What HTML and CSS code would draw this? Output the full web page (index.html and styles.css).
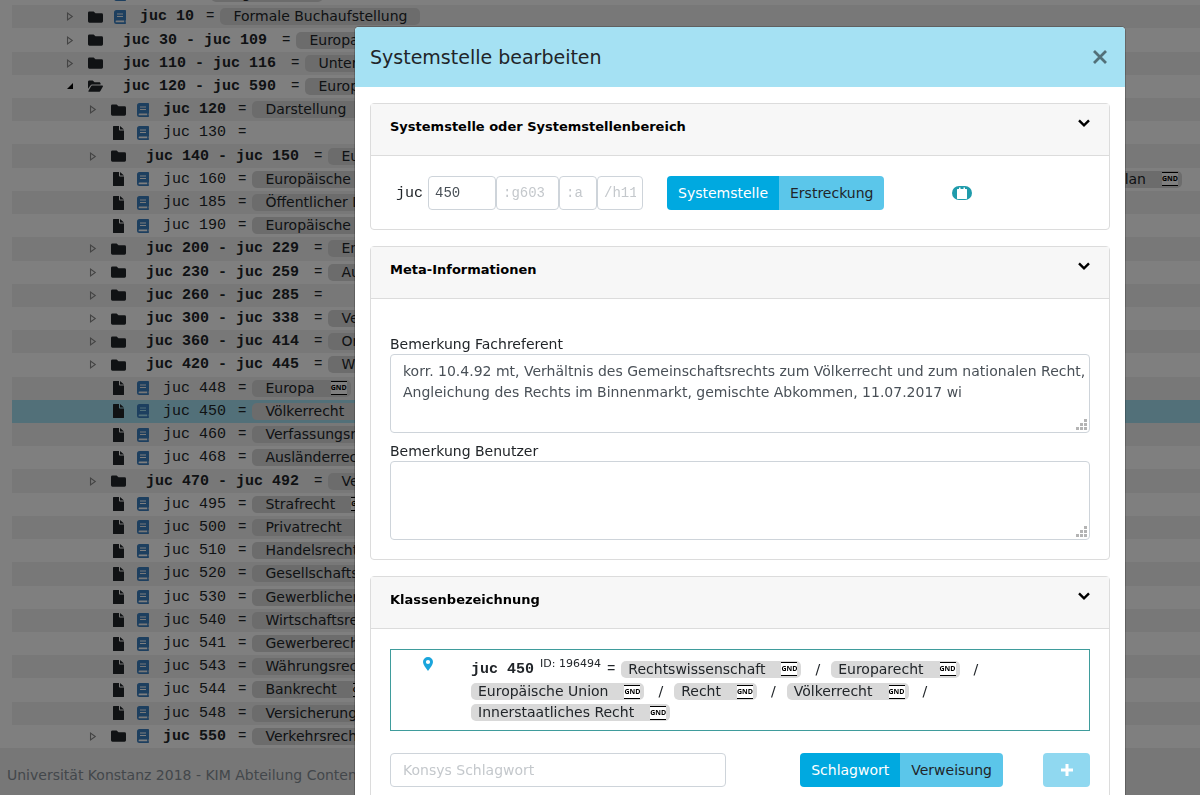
FILE: index.html
```html
<!DOCTYPE html>
<html lang="de">
<head>
<meta charset="utf-8">
<title>Systemstelle bearbeiten</title>
<link rel="stylesheet" href="styles.css">
</head>
<body>
<svg class="sprite" aria-hidden="true">
  <symbol id="folder" viewBox="0 0 16 12"><path d="M1.500 0H6l2 2h6.500A1.500 1.500 0 0 1 16 3.500v7a1.500 1.500 0 0 1-1.500 1.500h-13A1.500 1.500 0 0 1 0 10.500v-9A1.500 1.500 0 0 1 1.500 0z"/></symbol>
  <symbol id="open" viewBox="0 0 16 12"><path d="M0 9V1.500C0 .7.600 0 1.400 0H5l2 2h5c.8 0 1.400.6 1.400 1.400V4.500H4.300c-.7 0-1.300.3-1.700 1zM.4 11.200 3.300 6.200c.2-.4.600-.7 1-.7h11c.6 0 .9.600.6 1L13.200 11.300c-.2.400-.6.700-1 .7H.9c-.5 0-.8-.4-.5-.8z"/></symbol>
  <symbol id="file" viewBox="0 0 11 14"><path d="M0 .6C0 .2.300 0 .6 0H6v3.500c0 .5.300.9.800.9H11v9c0 .4-.3.600-.6.600H.6c-.3 0-.6-.2-.6-.6zM7 0l4 3.600H7z"/></symbol>
  <symbol id="book" viewBox="0 0 12 14"><path fill-rule="evenodd" d="M2.500 0h8.700c.5 0 .8.300.8.800v9c0 .3-.1.500-.3.600-.1.500-.1 1.400 0 1.800.2.200.3.300.3.600v.4c0 .5-.3.800-.8.800H2.500A2.500 2.500 0 0 1 0 11.500v-9A2.500 2.500 0 0 1 2.500 0zM3 3.500v1h6v-1zM3 6v1h6V6zM2.500 10.500a.8.800 0 0 0 0 1.800h7.700v-1.800z"/></symbol>
  <symbol id="closed" viewBox="0 0 6 8"><path d="M.8 1v6L5 4z" fill="none" stroke="currentColor"/></symbol>
  <symbol id="opened" viewBox="0 0 6 6"><path d="M6 0v6H0z"/></symbol>
  <symbol id="chevron" viewBox="0 0 12 8"><path d="M1 1.300 6 6.300l5-5" fill="none" stroke="currentColor" stroke-width="2.400"/></symbol>
  <symbol id="grip" viewBox="0 0 11 11"><path d="M8 0h3v3H8zM4 4h3v3H4zM8 4h3v3H8zM0 8h3v3H0zM4 8h3v3H4zM8 8h3v3H8z"/></symbol>
</svg>

<div class="page">
  <main class="tree">
    <div class="row l1"><span class="caret"></span><svg class="ico"><use href="#folder"/></svg><svg class="book"><use href="#book"/></svg><b class="code">juc 1</b><span class="eq">=</span><span class="tag">Allgemeines</span></div>
    <div class="row l1"><svg class="caret"><use href="#closed"/></svg><svg class="ico"><use href="#folder"/></svg><svg class="book"><use href="#book"/></svg><b class="code">juc 10</b><span class="eq">=</span><span class="tag">Formale Buchaufstellung</span></div>
    <div class="row l1"><svg class="caret"><use href="#closed"/></svg><svg class="ico"><use href="#folder"/></svg><b class="code range">juc 30 - juc 109</b><span class="eq">=</span><span class="tag">Europa</span></div>
    <div class="row l1"><svg class="caret"><use href="#closed"/></svg><svg class="ico"><use href="#folder"/></svg><b class="code range">juc 110 - juc 116</b><span class="eq">=</span><span class="tag">Unterricht</span></div>
    <div class="row l1"><svg class="caret expanded"><use href="#opened"/></svg><svg class="ico"><use href="#open"/></svg><b class="code range">juc 120 - juc 590</b><span class="eq">=</span><span class="tag">Europarecht</span></div>
    <div class="row l2"><svg class="caret"><use href="#closed"/></svg><svg class="ico"><use href="#folder"/></svg><svg class="book"><use href="#book"/></svg><b class="code">juc 120</b><span class="eq">=</span><span class="tag">Darstellung</span></div>
    <div class="row l2"><span class="caret"></span><svg class="ico"><use href="#file"/></svg><svg class="book"><use href="#book"/></svg><span class="code">juc 130</span><span class="eq">=</span></div>
    <div class="row l2"><svg class="caret"><use href="#closed"/></svg><svg class="ico"><use href="#folder"/></svg><b class="code range">juc 140 - juc 150</b><span class="eq">=</span><span class="tag">Europa</span></div>
    <div class="row l2"><span class="caret"></span><svg class="ico"><use href="#file"/></svg><svg class="book"><use href="#book"/></svg><span class="code">juc 160</span><span class="eq">=</span><span class="tag wide"><span>Europäische Gemeinschaft</span><span class="tail">Plan<i class="gnd">GND</i></span></span></div>
    <div class="row l2"><span class="caret"></span><svg class="ico"><use href="#file"/></svg><svg class="book"><use href="#book"/></svg><span class="code">juc 185</span><span class="eq">=</span><span class="tag">Öffentlicher Dienst</span></div>
    <div class="row l2"><span class="caret"></span><svg class="ico"><use href="#file"/></svg><svg class="book"><use href="#book"/></svg><span class="code">juc 190</span><span class="eq">=</span><span class="tag">Europäische Agentur</span></div>
    <div class="row l2"><svg class="caret"><use href="#closed"/></svg><svg class="ico"><use href="#folder"/></svg><b class="code range">juc 200 - juc 229</b><span class="eq">=</span><span class="tag">Energie</span></div>
    <div class="row l2"><svg class="caret"><use href="#closed"/></svg><svg class="ico"><use href="#folder"/></svg><b class="code range">juc 230 - juc 259</b><span class="eq">=</span><span class="tag">Autor</span></div>
    <div class="row l2"><svg class="caret"><use href="#closed"/></svg><svg class="ico"><use href="#folder"/></svg><b class="code range">juc 260 - juc 285</b><span class="eq">=</span></div>
    <div class="row l2"><svg class="caret"><use href="#closed"/></svg><svg class="ico"><use href="#folder"/></svg><b class="code range">juc 300 - juc 338</b><span class="eq">=</span><span class="tag">Verwaltung</span></div>
    <div class="row l2"><svg class="caret"><use href="#closed"/></svg><svg class="ico"><use href="#folder"/></svg><b class="code range">juc 360 - juc 414</b><span class="eq">=</span><span class="tag">Organ</span></div>
    <div class="row l2"><svg class="caret"><use href="#closed"/></svg><svg class="ico"><use href="#folder"/></svg><b class="code range">juc 420 - juc 445</b><span class="eq">=</span><span class="tag">Ware</span></div>
    <div class="row l2"><span class="caret"></span><svg class="ico"><use href="#file"/></svg><svg class="book"><use href="#book"/></svg><span class="code">juc 448</span><span class="eq">=</span><span class="tag">Europa<i class="gnd">GND</i></span></div>
    <div class="row l2 selected"><span class="caret"></span><svg class="ico"><use href="#file"/></svg><svg class="book"><use href="#book"/></svg><span class="code">juc 450</span><span class="eq">=</span><span class="tag">Völkerrecht<i class="gnd">GND</i></span></div>
    <div class="row l2"><span class="caret"></span><svg class="ico"><use href="#file"/></svg><svg class="book"><use href="#book"/></svg><span class="code">juc 460</span><span class="eq">=</span><span class="tag">Verfassungsrecht</span></div>
    <div class="row l2"><span class="caret"></span><svg class="ico"><use href="#file"/></svg><svg class="book"><use href="#book"/></svg><span class="code">juc 468</span><span class="eq">=</span><span class="tag">Ausländerrecht</span></div>
    <div class="row l2"><svg class="caret"><use href="#closed"/></svg><svg class="ico"><use href="#folder"/></svg><b class="code range">juc 470 - juc 492</b><span class="eq">=</span><span class="tag">Verwaltung</span></div>
    <div class="row l2"><span class="caret"></span><svg class="ico"><use href="#file"/></svg><svg class="book"><use href="#book"/></svg><span class="code">juc 495</span><span class="eq">=</span><span class="tag">Strafrecht<i class="gnd">GND</i></span></div>
    <div class="row l2"><span class="caret"></span><svg class="ico"><use href="#file"/></svg><svg class="book"><use href="#book"/></svg><span class="code">juc 500</span><span class="eq">=</span><span class="tag">Privatrecht<i class="gnd">GND</i></span></div>
    <div class="row l2"><span class="caret"></span><svg class="ico"><use href="#file"/></svg><svg class="book"><use href="#book"/></svg><span class="code">juc 510</span><span class="eq">=</span><span class="tag">Handelsrecht</span></div>
    <div class="row l2"><span class="caret"></span><svg class="ico"><use href="#file"/></svg><svg class="book"><use href="#book"/></svg><span class="code">juc 520</span><span class="eq">=</span><span class="tag">Gesellschaftsrecht</span></div>
    <div class="row l2"><span class="caret"></span><svg class="ico"><use href="#file"/></svg><svg class="book"><use href="#book"/></svg><span class="code">juc 530</span><span class="eq">=</span><span class="tag">Gewerblicher</span></div>
    <div class="row l2"><span class="caret"></span><svg class="ico"><use href="#file"/></svg><svg class="book"><use href="#book"/></svg><span class="code">juc 540</span><span class="eq">=</span><span class="tag">Wirtschaftsrecht</span></div>
    <div class="row l2"><span class="caret"></span><svg class="ico"><use href="#file"/></svg><svg class="book"><use href="#book"/></svg><span class="code">juc 541</span><span class="eq">=</span><span class="tag">Gewerberecht</span></div>
    <div class="row l2"><span class="caret"></span><svg class="ico"><use href="#file"/></svg><svg class="book"><use href="#book"/></svg><span class="code">juc 543</span><span class="eq">=</span><span class="tag">Währungsrecht</span></div>
    <div class="row l2"><span class="caret"></span><svg class="ico"><use href="#file"/></svg><svg class="book"><use href="#book"/></svg><span class="code">juc 544</span><span class="eq">=</span><span class="tag">Bankrecht<i class="gnd">GND</i></span></div>
    <div class="row l2"><span class="caret"></span><svg class="ico"><use href="#file"/></svg><svg class="book"><use href="#book"/></svg><span class="code">juc 548</span><span class="eq">=</span><span class="tag">Versicherung</span></div>
    <div class="row l2"><svg class="caret"><use href="#closed"/></svg><svg class="ico"><use href="#folder"/></svg><svg class="book"><use href="#book"/></svg><b class="code">juc 550</b><span class="eq">=</span><span class="tag">Verkehrsrecht</span></div>
  </main>
  <footer class="footer">Universität Konstanz 2018 - KIM Abteilung Content</footer>
</div>

<div class="overlay">
  <div class="modal" role="dialog" aria-labelledby="title">
    <header class="modal-head">
      <h1 id="title">Systemstelle bearbeiten</h1>
      <button class="close" aria-label="Schließen"><svg width="14" height="14" viewBox="0 0 14 14"><path d="m1 1 12 12m0-12-12 12" stroke="currentColor" stroke-width="2.800"/></svg></button>
    </header>
    <div class="modal-body">
      <section class="card">
        <header class="card-head"><h2>Systemstelle oder Systemstellenbereich</h2><button class="fold" aria-label="Einklappen"><svg><use href="#chevron"/></svg></button></header>
        <form class="card-body position">
          <label class="prefix" for="nr">juc</label>
          <div class="parts">
            <input class="nr" id="nr" value="450">
            <input class="sub" aria-label="Untergliederung" placeholder=":g603">
            <input class="letter" aria-label="Buchstabe" placeholder=":a">
            <input class="ext" aria-label="Zusatz" placeholder="/h11">
          </div>
          <div class="group"><button type="button" class="btn on">Systemstelle</button><button type="button" class="btn">Erstreckung</button></div>
          <button type="button" class="badge" aria-label="Kalender"><svg width="12" height="12" viewBox="0 0 12 12"><path d="M1.500 2H3V.5h1.500V2h3V.5H9V2h1.500c.3 0 .5.200.5.500v9c0 .3-.2.500-.5.500h-9c-.3 0-.5-.2-.5-.5v-9c0-.3.200-.5.500-.5z" fill="#fff"/></svg></button>
        </form>
      </section>

      <section class="card">
        <header class="card-head"><h2>Meta-Informationen</h2><button class="fold" aria-label="Einklappen"><svg><use href="#chevron"/></svg></button></header>
        <div class="card-body notes">
          <div class="note"><label for="n1">Bemerkung Fachreferent</label>
            <div class="area"><textarea id="n1">korr. 10.4.92 mt, Verhältnis des Gemeinschaftsrechts zum Völkerrecht und zum nationalen Recht, Angleichung des Rechts im Binnenmarkt, gemischte Abkommen, 11.07.2017 wi</textarea><svg class="grip"><use href="#grip"/></svg></div></div>
          <div class="note"><label for="n2">Bemerkung Benutzer</label>
            <div class="area"><textarea id="n2"></textarea><svg class="grip"><use href="#grip"/></svg></div></div>
        </div>
      </section>

      <section class="card">
        <header class="card-head"><h2>Klassenbezeichnung</h2><button class="fold" aria-label="Einklappen"><svg><use href="#chevron"/></svg></button></header>
        <div class="card-body">
          <div class="entry">
            <svg class="pin" viewBox="0 0 10 14"><path fill-rule="evenodd" d="M5 0a5 5 0 0 1 5 5c0 2.800-2.600 5.500-5 9C2.600 10.500 0 7.800 0 5a5 5 0 0 1 5-5zm0 2.900a2.100 2.100 0 1 0 0 4.200 2.100 2.100 0 0 0 0-4.200z"/></svg>
            <div class="terms">
              <div class="term"><b class="code">juc 450</b><small>ID: 196494</small><span class="eq">=</span><span class="tag">Rechtswissenschaft<i class="gnd">GND</i></span><span class="sep">/</span></div>
              <div class="term"><span class="tag">Europarecht<i class="gnd">GND</i></span><span class="sep">/</span></div>
              <div class="term"><span class="tag">Europäische Union<i class="gnd">GND</i></span><span class="sep">/</span></div>
              <div class="term"><span class="tag">Recht<i class="gnd">GND</i></span><span class="sep">/</span></div>
              <div class="term"><span class="tag">Völkerrecht<i class="gnd">GND</i></span><span class="sep">/</span></div>
              <div class="term"><span class="tag">Innerstaatliches Recht<i class="gnd">GND</i></span></div>
            </div>
          </div>
          <form class="add">
            <input class="keyword" aria-label="Konsys Schlagwort" placeholder="Konsys Schlagwort">
            <div class="group"><button type="button" class="btn on">Schlagwort</button><button type="button" class="btn">Verweisung</button></div>
            <button type="button" class="btn plus" aria-label="Hinzufügen"><svg width="12" height="12" viewBox="0 0 12 12"><path d="M6 0v12M0 6h12" stroke="#fff" stroke-width="3"/></svg></button>
          </form>
        </div>
      </section>
    </div>
  </div>
</div>
</body>
</html>
```
FILE: styles.css
```css
* { box-sizing: border-box; }

body {
  margin: 0;
  font-family: "DejaVu Sans", Verdana, sans-serif;
  font-size: 14px;
  line-height: 21px;
  color: #212529;
  background: #fff;
}

button, input, textarea { font: inherit; color: inherit; }
button { border: 0; padding: 0; background: none; cursor: pointer; }
h1, h2 { margin: 0; }
.sprite { display: none; }

/* Tree behind the dialog */
.page {
  height: 100vh;
  display: flex;
  flex-direction: column;
  overflow: hidden;
}

.tree {
  flex: 1;
  display: grid;
  grid-auto-rows: 1fr;
  margin: -18px 0 0 12px;
}

.row {
  display: flex;
  align-items: center;
  min-height: 0;
  white-space: nowrap;
  overflow: hidden;
}
.row:nth-child(even) { background: #f0f0f0; }
.row.selected { background: #a5e1f3; }
.l1 { padding-left: 54px; }
.l2 { padding-left: 77px; }

.caret { width: 8px; height: 9px; margin-right: 14px; color: #888; flex: none; }
.caret.expanded { height: 6px; color: #212529; }
.ico { width: 15px; height: 12px; fill: currentColor; flex: none; }
.l2 .ico { height: 14px; }
.book { width: 12px; height: 14px; margin: 0 -6px 0 11px; fill: #3a7ebf; flex: none; }

.code {
  font-family: "Liberation Mono", "Courier New", monospace;
  font-size: 15px;
  margin-left: 20px;
}
.code.range { margin-right: 3px; }
.eq {
  font-family: "Liberation Mono", "Courier New", monospace;
  margin: 0 6px 0 12px;
}

.tag {
  display: inline-flex;
  align-items: center;
  height: 17px;
  padding: 0 13px;
  border-radius: 5px;
  background: #d9d9d9;
}
.tag:has(.gnd) { padding-right: 4px; }
.tag.wide { flex: 1; justify-content: space-between; margin-right: 18px; }
.tail { display: inline-flex; align-items: center; }

.gnd {
  width: 16px;
  height: 14px;
  margin-left: 16px;
  border: solid #000;
  border-width: 1px 0;
  background: #fff;
  color: #000;
  font: bold 7px/12px "Open Sans", sans-serif;
  text-align: center;
}

.footer {
  height: 47px;
  padding: 17px 7px 0;
  background: #eee;
  color: #868e96;
}

/* Dialog */
.overlay {
  position: fixed;
  inset: 0;
  overflow: hidden;
  padding: 27px 75px 0 355px;
  background: rgba(0, 0, 0, .5);
}

.modal {
  border-radius: 4px;
  background: #fff;
  box-shadow: 0 0 0 1px rgba(0, 0, 0, .2);
}

.modal-head {
  display: flex;
  align-items: center;
  justify-content: space-between;
  height: 60px;
  padding: 0 18px 0 15px;
  border-radius: 4px 4px 0 0;
  background: #a5e1f3;
}
.modal-head h1 { font-size: 19px; font-weight: normal; line-height: 30px; }
.close { display: flex; color: #527079; }
.modal-body {
  display: flex;
  flex-direction: column;
  gap: 16px;
  padding: 16px 15px 15px;
}

.card { border: 1px solid #dcdcdc; border-radius: 4px; }
.card-head {
  display: flex;
  justify-content: space-between;
  height: 52px;
  padding: 12px 19px;
  border-bottom: 1px solid #dcdcdc;
  background: #f7f7f7;
}
.card-head h2 { font-size: 13px; line-height: 21px; color: #000; }
.fold { display: flex; height: 14px; align-items: center; }
.fold svg { width: 12px; height: 8px; color: #000; }
.card-body { padding: 20px 19px 19px; }

input, textarea {
  display: block;
  border: 1px solid #ced4da;
  border-radius: 4px;
  background: #fff;
  color: #495057;
}
input { height: 34px; padding: 0 12px; }
::placeholder { color: #c4c8cc; opacity: 1; }

.position { display: flex; align-items: center; }
.prefix {
  margin: 0 5px 0 6px;
  font-family: "Liberation Mono", "Courier New", monospace;
  font-size: 15px;
}
.parts { display: flex; margin-right: 24px; }
.parts input {
  padding: 0 6px;
  font-family: "Liberation Mono", "Courier New", monospace;
}
.parts .nr { width: 68px; }
.parts .sub { width: 63px; }
.parts .letter { width: 38px; }
.parts .ext { width: 46px; }

.group { display: flex; }
.btn {
  height: 34px;
  padding: 0 11px;
  border-radius: 0 4px 4px 0;
  background: #5bc6ea;
}
.btn.on { border-radius: 4px 0 0 4px; background: #00a9e0; color: #fff; }
.btn.plus {
  display: flex;
  align-items: center;
  justify-content: center;
  width: 47px;
  border-radius: 4px;
  background: #90d8f0;
}
.badge {
  display: flex;
  align-items: center;
  justify-content: center;
  width: 20px;
  height: 14px;
  margin-left: 68px;
  border-radius: 7px;
  background: #1f9bab;
}

.notes { display: flex; flex-direction: column; gap: 8px; padding-top: 35px; }
.note label { display: block; line-height: 20px; }
.area { position: relative; }
.area textarea { width: 100%; height: 79px; padding: 6px 0 6px 12px; resize: none; }
.grip { position: absolute; right: 3px; bottom: 3px; width: 11px; height: 11px; fill: #b4b4b4; }

.entry {
  display: flex;
  padding: 7px 8px 7px 32px;
  border: 1px solid #3f9c9c;
}
.pin { flex: none; width: 10px; height: 14px; margin-right: 38px; fill: #1ba5dc; }
.terms { flex: 1; display: flex; flex-wrap: wrap; column-gap: 11px; }
.term { display: flex; align-items: center; height: 21px; }
.term:nth-child(-n+2) { height: 24px; }
.term .code { margin: 0; }
.term small { margin-left: 6px; font-size: 11px; line-height: 14px; align-self: flex-start; }
.term .eq { margin: 0 6px; }
.term .tag { padding-left: 7px; }
.sep { margin-left: 14px; }

.add { display: flex; margin-top: 22px; }
.keyword { width: 48%; margin-right: auto; }
.add .plus { margin-left: 40px; }
```
